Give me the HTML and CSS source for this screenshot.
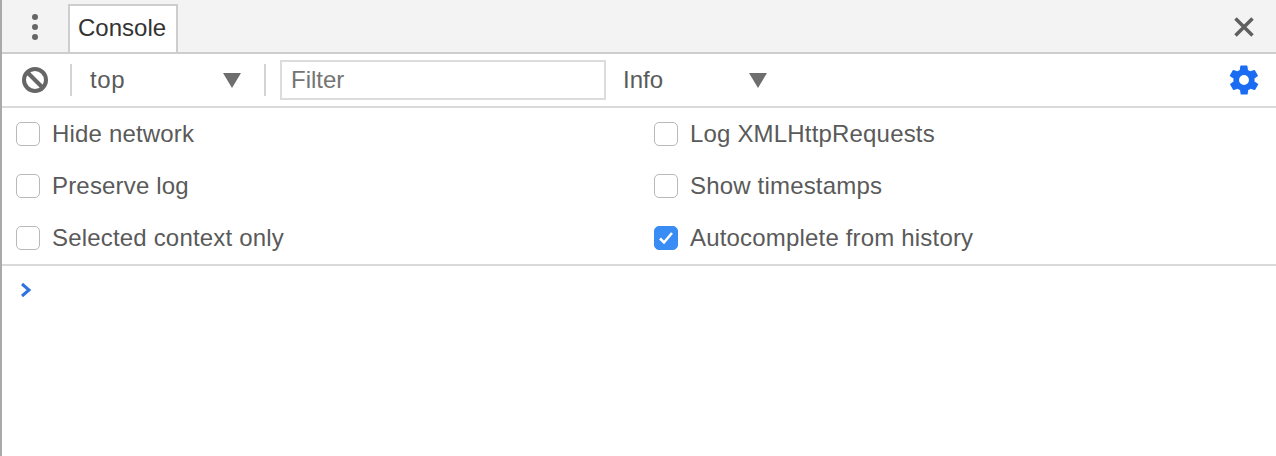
FILE: index.html
```html
<!DOCTYPE html>
<html lang="en">
<head>
<meta charset="utf-8">
<title>Console</title>
<link rel="stylesheet" href="styles.css">
</head>
<body>
<div class="panel">
  <header class="tabbar">
    <button class="dots" aria-label="More">
      <svg width="8" height="28" viewBox="0 0 8 28"><circle cx="4" cy="4" r="3"/><circle cx="4" cy="14" r="3"/><circle cx="4" cy="24" r="3"/></svg>
    </button>
    <div class="tab">Console</div>
    <button class="close" aria-label="Close">
      <svg width="20" height="20" viewBox="0 0 20 20"><path d="M1.5 1.5 18.5 18.5M18.5 1.5 1.5 18.5"/></svg>
    </button>
  </header>
  <div class="toolbar">
    <svg class="clear" width="28" height="28" viewBox="0 0 28 28"><circle cx="14" cy="14" r="11"/><path d="M6.5 6.5 21.5 21.5"/></svg>
    <span class="sep"></span>
    <div class="select context"><span>top</span><i class="arrow"></i></div>
    <span class="sep"></span>
    <div class="filter">Filter</div>
    <div class="select level"><span>Info</span><i class="arrow"></i></div>
    <svg class="gear" width="34" height="34" viewBox="0 0 24 24"><path fill-rule="evenodd" d="M19.400 13a7.500 7.500 0 0 0 0-2l2.200-1.700a.5.500 0 0 0 .1-.7l-2-3.500a.5.500 0 0 0-.6-.2l-2.600 1a7.600 7.600 0 0 0-1.700-1l-.4-2.700a.5.500 0 0 0-.5-.4h-4a.5.500 0 0 0-.5.4l-.4 2.700a7.600 7.600 0 0 0-1.700 1l-2.600-1a.5.500 0 0 0-.6.2l-2 3.500a.5.500 0 0 0 .1.700L4.600 11a7.500 7.500 0 0 0 0 2l-2.200 1.700a.5.500 0 0 0-.1.700l2 3.500a.5.500 0 0 0 .6.200l2.600-1c.5.400 1.100.7 1.700 1l.4 2.700a.5.500 0 0 0 .5.400h4a.5.500 0 0 0 .5-.4l.4-2.700c.6-.3 1.200-.6 1.700-1l2.600 1a.5.500 0 0 0 .6-.2l2-3.500a.5.500 0 0 0-.1-.7ZM12 15.500a3.500 3.500 0 1 1 0-7 3.500 3.500 0 0 1 0 7Z"/></svg>
  </div>
  <section class="options">
    <label class="option"><span class="check"></span>Hide network</label>
    <label class="option"><span class="check"></span>Log XMLHttpRequests</label>
    <label class="option"><span class="check"></span>Preserve log</label>
    <label class="option"><span class="check"></span>Show timestamps</label>
    <label class="option"><span class="check"></span>Selected context only</label>
    <label class="option"><span class="check checked"><svg width="16" height="14" viewBox="0 0 16 14"><path d="M2 7.500 6 11.500 14 2"/></svg></span>Autocomplete from history</label>
  </section>
  <div class="prompt">
    <svg width="12" height="16" viewBox="0 0 12 16"><path d="M2 2 9 8 2 14"/></svg>
  </div>
</div>
</body>
</html>
```
FILE: styles.css
```css
* { box-sizing: border-box; }
html, body { margin: 0; height: 100%; background: #fff; }
body { overflow: hidden; }
.panel {
  height: 456px;
  border-left: 2px solid #a9a9a9;
  font-family: "Liberation Sans", Arial, sans-serif;
  font-size: 24px;
  color: #5a5a5a;
}
button { background: none; border: 0; padding: 0; display: flex; }
.tabbar {
  height: 54px;
  display: flex;
  align-items: flex-end;
  background: #f3f3f3;
  border-bottom: 2px solid #cdcdcd;
  padding-left: 29px;
}
.dots { align-self: center; margin-top: 2px; }
.dots svg { fill: #666; }
.tab {
  margin-left: 29px;
  margin-bottom: -2px;
  height: 50px;
  width: 110px;
  background: #fff;
  border: 2px solid #cdcdcd;
  padding-left: 8px;
  line-height: 44px;
  color: #333;
}
.close { margin-left: auto; margin-right: 22px; align-self: center; margin-top: 2px; }
.close svg { fill: none; stroke: #5f5f5f; stroke-width: 3.5; }
.toolbar {
  height: 54px;
  display: flex;
  align-items: center;
  border-bottom: 2px solid #dadada;
  padding-left: 19px;
}
.clear { fill: none; stroke: #666; stroke-width: 4; flex: none; }
.sep { width: 2px; height: 32px; background: #d4d4d4; flex: none; }
.clear + .sep { margin-left: 21px; }
.select { display: flex; align-items: center; }
.arrow {
  width: 0; height: 0;
  border-left: 9px solid transparent;
  border-right: 9px solid transparent;
  border-top: 15px solid #6e6e6e;
}
.context { width: 192px; padding: 0 23px 0 18px; justify-content: space-between; letter-spacing: .6px; }
.filter {
  width: 326px;
  height: 40px;
  margin-left: 14px;
  border: 2px solid #dcdcdc;
  padding-left: 9px;
  line-height: 36px;
  color: #757575;
}
.level { width: 144px; margin-left: 17px; justify-content: space-between; }
.gear { margin-left: auto; margin-right: 15px; fill: #1a6df2; flex: none; }
.options {
  height: 158px;
  display: grid;
  grid-template-columns: 638px 1fr;
  grid-auto-rows: 52px;
  border-bottom: 2px solid #dadada;
  padding-left: 14px;
  letter-spacing: .18px;
}
.option { display: flex; align-items: center; gap: 12px; }
.check {
  width: 24px;
  height: 24px;
  border: 1.500px solid #b9b9b9;
  border-radius: 5px;
  background: #fff;
  display: flex;
  align-items: center;
  justify-content: center;
  flex: none;
}
.check.checked { background: #3a8cf5; border-color: #3a8cf5; }
.check svg { fill: none; stroke: #fff; stroke-width: 2.500; }
.prompt { padding: 16px 0 0 18px; display: flex; }
.prompt svg { fill: none; stroke: #2f72e0; stroke-width: 3; }
```
